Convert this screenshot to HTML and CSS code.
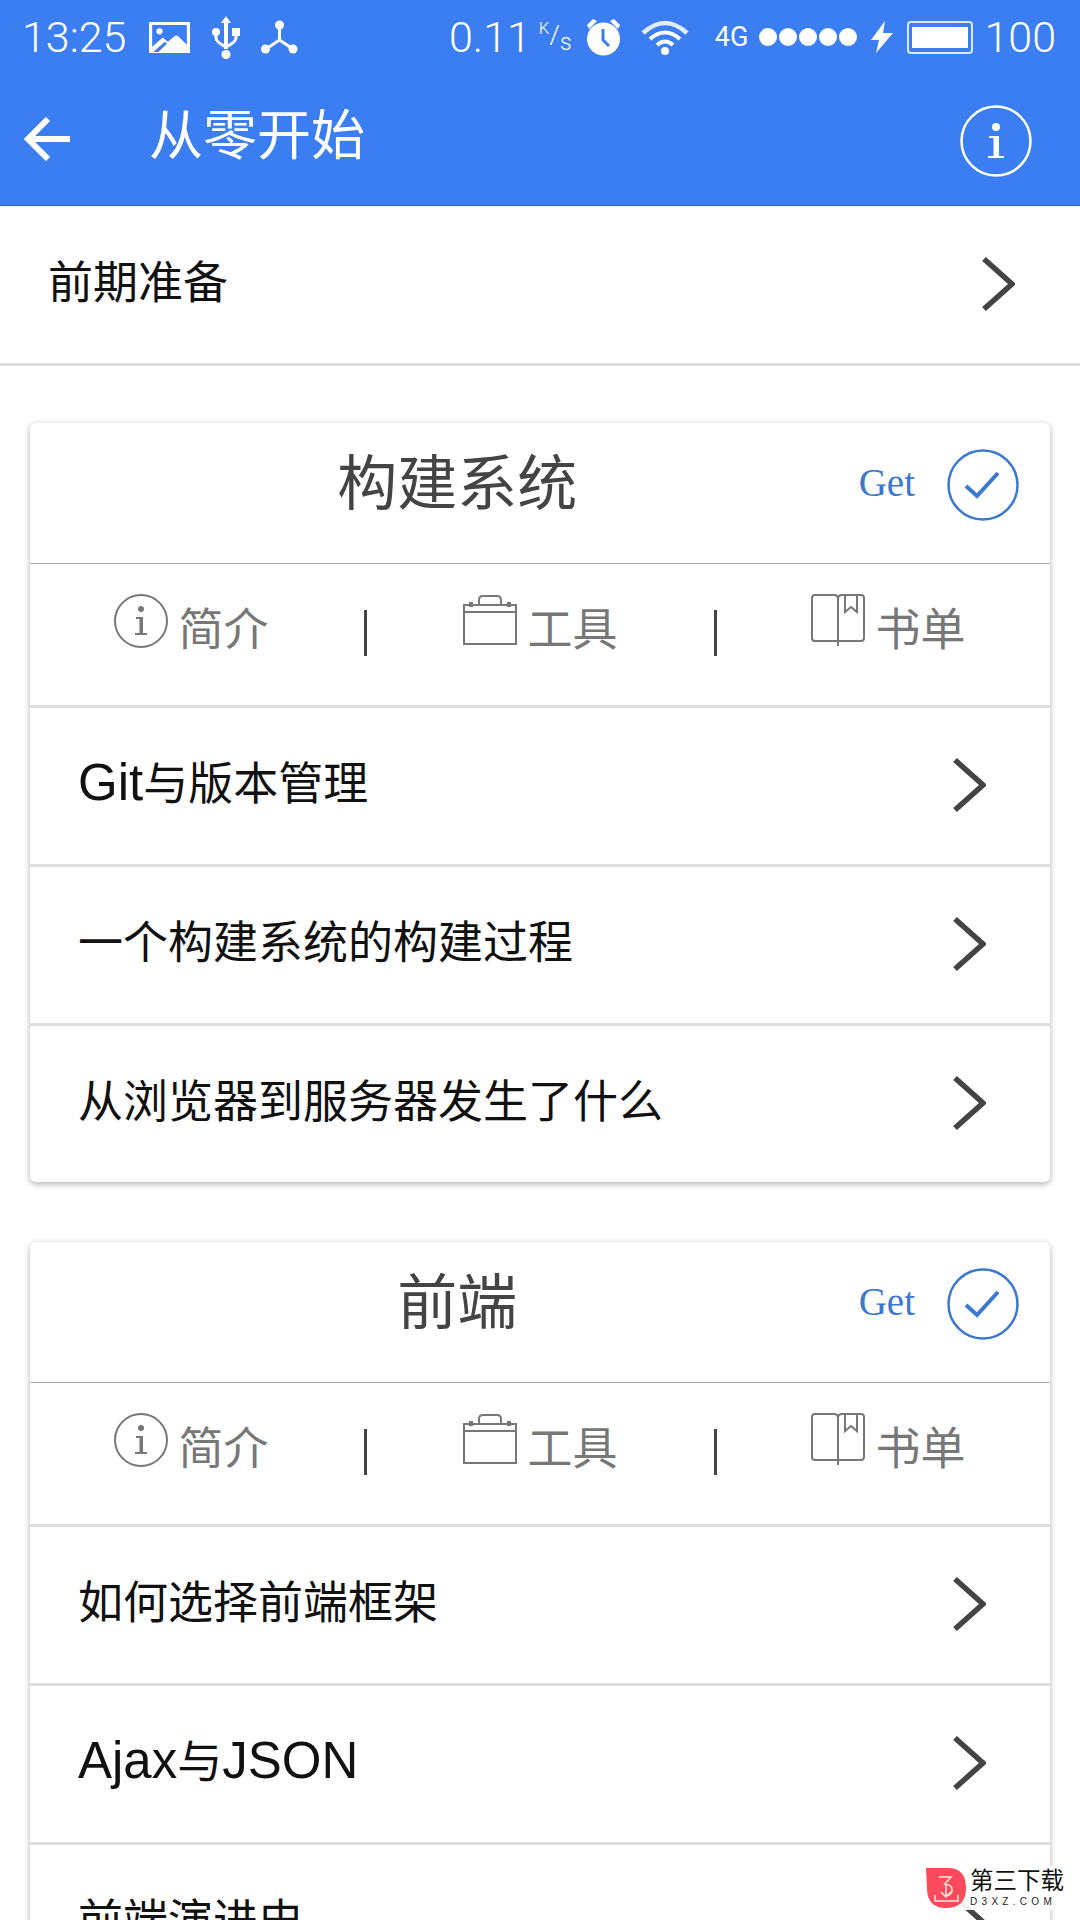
FILE: index.html
```html
<!DOCTYPE html>
<html lang="zh-CN">
<head>
    <meta charset="UTF-8">
    <meta name="viewport" content="width=device-width, initial-scale=1.0">
    <title>从零开始</title>
    <link rel="stylesheet" href="styles.css">
</head>
<body>
    <svg class="defs" width="0" height="0">
        <symbol id="chevron" viewBox="0 0 34 54">
            <path d="M3 2 L31 27 L3 52" fill="none" stroke="#444" stroke-width="5.500"/>
        </symbol>
        <symbol id="info" viewBox="0 0 54 54">
            <circle cx="27" cy="27" r="26" fill="none" stroke="#777" stroke-width="2"/>
            <circle cx="27" cy="15" r="3" fill="#777"/>
            <path d="M22 23 H29 V39 H33 V41 H21 V39 H25.500 V25 H22 Z" fill="#777"/>
        </symbol>
        <symbol id="case" viewBox="0 0 54 54">
            <path d="M1 11 H53 V50 H1 Z M1 18 H53 M16 11 V6 Q16 2 20 2 H34 Q38 2 38 6 V11" fill="none" stroke="#777" stroke-width="2"/>
            <path d="M6 8 H10 V13 H6 Z M44 8 H48 V13 H44 Z" fill="#777"/>
        </symbol>
        <symbol id="book" viewBox="0 0 54 54">
            <path d="M27 47 H4 Q1 47 1 44 V4 Q1 1 4 1 H23 Q27 1 27 5 V52 M27 47 H50 Q53 47 53 44 V4 Q53 1 50 1 H31 Q27 1 27 5" fill="none" stroke="#777" stroke-width="2"/>
            <path d="M34 1 V18 L40 13 L46 18 V1" fill="none" stroke="#777" stroke-width="2"/>
        </symbol>
        <symbol id="check" viewBox="0 0 72 72">
            <circle cx="36" cy="36" r="34.500" fill="none" stroke="#3b78d0" stroke-width="2.500"/>
            <path d="M19 37 L30 47 L51 24" fill="none" stroke="#3b78d0" stroke-width="4"/>
        </symbol>
    </svg>

    <header class="app-header">
        <div class="status-bar">
            <div class="status-left">
                <span class="status-time">13:25</span>
                <svg class="icon-image" width="41" height="31" viewBox="0 0 39 30" preserveAspectRatio="none">
                    <path d="M0 0 H39 V30 H0 Z" fill="#fff"/>
                    <path d="M3 3 H36 V22 L28 14 Q26 12 24 14 L18 19 L13 15 L3 24 Z" fill="#3b7ef2"/>
                    <circle cx="10" cy="9" r="3" fill="#fff"/>
                    <path d="M4 29 L15 19 L17 21 L9 29 Z" fill="#3b7ef2"/>
                </svg>
                <svg class="icon-usb" width="28" height="43" viewBox="0 0 28 43">
                    <path d="M14 0 L19 7 H16 V33 H12 V7 H9 Z" fill="#fff"/>
                    <circle cx="14" cy="38.500" r="4.500" fill="#fff"/>
                    <circle cx="4" cy="16" r="4" fill="#fff"/>
                    <path d="M20 12 H28 V20 H20 Z" fill="#fff"/>
                    <path d="M4 18 V22 Q4 26 14 31 Q24 26 24 22 V18" fill="none" stroke="#fff" stroke-width="3"/>
                </svg>
                <svg class="icon-nodes" width="37" height="34" viewBox="0 0 37 34">
                    <circle cx="18.500" cy="5" r="4.500" fill="#fff"/>
                    <circle cx="4.500" cy="29" r="4.500" fill="#fff"/>
                    <circle cx="32" cy="29" r="4.500" fill="#fff"/>
                    <path d="M18.500 7 V20 L5 29 M18.500 20 L32 29" fill="none" stroke="#fff" stroke-width="3"/>
                </svg>
            </div>
            <div class="status-right">
                <span class="status-speed">0.11</span>
                <span class="status-unit"><sup>K</sup>/<sub>s</sub></span>
                <svg class="icon-alarm" width="35" height="38" viewBox="0 0 35 38">
                    <circle cx="17.500" cy="21" r="16.500" fill="#fff"/>
                    <path d="M1 7 L7 1 L11 3 L3 11 Z M34 7 L28 1 L24 3 L32 11 Z" fill="#fff"/>
                    <path d="M17 11 V22 L23 28" fill="none" stroke="#3b7ef2" stroke-width="3"/>
                </svg>
                <svg class="icon-wifi" width="48" height="35" viewBox="0 0 48 35">
                    <path d="M2 13 Q24 -7 46 13" fill="none" stroke="#fff" stroke-width="4.500" opacity=".85"/>
                    <path d="M9 19 Q24 6 39 19" fill="none" stroke="#fff" stroke-width="4"/>
                    <path d="M16 25 Q24 18 32 25" fill="none" stroke="#fff" stroke-width="4"/>
                    <circle cx="24" cy="31" r="4" fill="#fff"/>
                </svg>
                <span class="status-net">4G</span>
                <span class="signal">
                    <i></i><i></i><i></i><i></i><i></i>
                </span>
                <svg class="icon-bolt" width="22" height="32" viewBox="0 0 22 32">
                    <path d="M14 0 L0 19 H8 L5 32 L22 12 H12 Z" fill="#fff"/>
                </svg>
                <span class="battery"><span class="battery-fill"></span></span>
                <span class="status-level">100</span>
            </div>
        </div>
        <div class="title-bar">
            <svg class="back-icon" width="46" height="44" viewBox="0 0 46 44">
                <path d="M24 2 L4 22 L24 42 M4 22 H46" fill="none" stroke="#fff" stroke-width="6"/>
            </svg>
            <h1 class="page-title">从零开始</h1>
            <svg class="about-icon" width="72" height="72" viewBox="0 0 72 72">
                <circle cx="36" cy="36" r="34.500" fill="none" stroke="#fff" stroke-width="2.500"/>
                <circle cx="36" cy="22" r="4" fill="#fff"/>
                <path d="M29 31 H39 V51 H44 V53 H28 V51 H33.500 V33 H29 Z" fill="#fff"/>
            </svg>
        </div>
    </header>

    <a class="top-row">
        <span>前期准备</span>
        <svg class="chevron" width="34" height="54"><use href="#chevron"/></svg>
    </a>

    <section class="card">
        <div class="card-head">
            <h2 class="card-title">构建系统</h2>
            <span class="get-label">Get</span>
            <svg class="check-icon" width="72" height="72"><use href="#check"/></svg>
        </div>
        <div class="tabs">
            <div class="tab"><svg width="54" height="54"><use href="#info"/></svg><span>简介</span></div>
            <i class="tab-sep"></i>
            <div class="tab"><svg width="54" height="54"><use href="#case"/></svg><span>工具</span></div>
            <i class="tab-sep"></i>
            <div class="tab"><svg width="54" height="54"><use href="#book"/></svg><span>书单</span></div>
        </div>
        <a class="row"><span><b class="latin">Git</b>与版本管理</span><svg class="chevron" width="34" height="54"><use href="#chevron"/></svg></a>
        <a class="row"><span>一个构建系统的构建过程</span><svg class="chevron" width="34" height="54"><use href="#chevron"/></svg></a>
        <a class="row"><span>从浏览器到服务器发生了什么</span><svg class="chevron" width="34" height="54"><use href="#chevron"/></svg></a>
    </section>

    <section class="card">
        <div class="card-head">
            <h2 class="card-title">前端</h2>
            <span class="get-label">Get</span>
            <svg class="check-icon" width="72" height="72"><use href="#check"/></svg>
        </div>
        <div class="tabs">
            <div class="tab"><svg width="54" height="54"><use href="#info"/></svg><span>简介</span></div>
            <i class="tab-sep"></i>
            <div class="tab"><svg width="54" height="54"><use href="#case"/></svg><span>工具</span></div>
            <i class="tab-sep"></i>
            <div class="tab"><svg width="54" height="54"><use href="#book"/></svg><span>书单</span></div>
        </div>
        <a class="row"><span>如何选择前端框架</span><svg class="chevron" width="34" height="54"><use href="#chevron"/></svg></a>
        <a class="row"><span><b class="latin">Ajax</b>与<b class="latin">JSON</b></span><svg class="chevron" width="34" height="54"><use href="#chevron"/></svg></a>
        <a class="row"><span>前端演进史</span><svg class="chevron" width="34" height="54"><use href="#chevron"/></svg></a>
    </section>

    <!-- watermark sits over the page corner -->
    <div class="watermark">
        <svg width="40" height="40" viewBox="0 0 40 40">
            <path d="M0 0 H22 Q40 0 40 20 Q40 40 20 40 Q1 40 1 20 Z" fill="#fb4a5c"/>
            <path d="M13 9 H25 L19 16 Q27 17 26 23 Q25 28 19 27 M20 16 V29 M15 24 L20 29 L25 24 M9 27 V33 H32 V27" fill="none" stroke="#ffe9e0" stroke-width="1.500"/>
        </svg>
        <div class="watermark-text">
            <strong>第三下载</strong>
            <small>D3XZ.COM</small>
        </div>
    </div>
</body>
</html>
```

FILE: styles.css
```css
* {
    margin: 0;
    padding: 0;
    box-sizing: border-box;
}

html, body {
    height: 1920px;
    overflow: hidden;
}

body {
    position: relative;
    font-family: "Liberation Sans", "Noto Sans CJK SC", sans-serif;
    background-color: white;
    color: #111;
}

.defs {
    position: absolute;
}

/* header */
.app-header {
    height: 206px;
    background-color: #3b7ef2;
    border-bottom: 1px solid #2d68b8;
    color: white;
}

.status-bar {
    display: flex;
    justify-content: space-between;
    height: 72px;
    padding: 15px 24px 0 22px;
}

.status-left, .status-right {
    display: flex;
    align-items: center;
    height: 44px;
    font-family: Roboto, sans-serif;
    font-weight: 300;
}

.status-time {
    font-size: 43px;
}

.icon-image {
    margin-left: 23px;
}

.icon-usb {
    margin-left: 22px;
}

.icon-nodes {
    margin-left: 21px;
}

.status-speed, .status-level {
    font-size: 43px;
}

.status-unit {
    width: 29px;
    margin-left: 8px;
    font-size: 26px;
    line-height: 1;
    white-space: nowrap;
}

.status-unit sup {
    font-size: 17px;
    vertical-align: 10px;
}

.status-unit sub {
    font-size: 23px;
    vertical-align: -6px;
}

.icon-alarm {
    margin-left: 18px;
}

.icon-wifi {
    margin-left: 20px;
}

.status-net {
    margin-left: 26px;
    font-size: 27px;
    font-weight: 400;
}

.signal {
    display: flex;
    gap: 2px;
    margin-left: 11px;
}

.signal i {
    width: 18px;
    height: 18px;
    border-radius: 50%;
    background-color: white;
}

.icon-bolt {
    margin-left: 14px;
}

.battery {
    width: 66px;
    height: 33px;
    margin-left: 14px;
    padding: 4px 3px;
    border: 2px solid #dbe8fd;
    border-radius: 4px;
}

.battery-fill {
    display: block;
    height: 100%;
    background-color: white;
}

.status-level {
    margin-left: 11px;
}

.title-bar {
    display: flex;
    align-items: center;
    height: 133px;
    padding: 0 48px 0 24px;
}

.page-title {
    flex: 1;
    margin-left: 79px;
    margin-top: -14px;
    font-size: 54px;
    font-weight: 400;
}

.back-icon {
    margin-top: 0;
}

.about-icon {
    margin-top: 4px;
}

/* rows */
.top-row, .row {
    display: flex;
    align-items: center;
    justify-content: space-between;
    font-size: 45px;
}

.top-row {
    height: 160px;
    padding: 0 65px 0 48px;
    border-bottom: 3px solid #ddd;
}

.top-row span {
    margin-top: -10px;
}

.row span {
    margin-top: -12px;
}

.latin {
    font-size: 51px;
    font-weight: 400;
}

.card {
    margin: 57px 30px 60px;
    background-color: white;
    border-radius: 6px;
    box-shadow: 0 2px 6px rgba(0,0,0,0.3);
}

.card-head {
    display: flex;
    align-items: center;
    height: 141px;
    padding: 0 31px 16px 0;
    border-bottom: 1px solid #aaa;
}

.card-title {
    flex: 1;
    margin-top: -14px;
    padding-left: 26px;
    font-size: 60px;
    font-weight: 400;
    text-align: center;
    color: #444;
}

.get-label {
    margin-top: -6px;
    margin-right: 32px;
    font-family: "Liberation Serif", serif;
    font-size: 39px;
    color: #3b78d0;
}

.check-icon {
    display: block;
}

.tabs {
    display: grid;
    grid-template-columns: 334px 3px 347px 3px 1fr;
    align-items: start;
    height: 144px;
    border-bottom: 3px solid #ddd;
}

.tab {
    display: flex;
    justify-content: center;
    gap: 10px;
    padding-top: 30px;
    font-size: 45px;
    color: #777;
}

.tab:first-child {
    padding-right: 11px;
}

.tab:last-child {
    padding-left: 10px;
}

.tab span {
    margin-top: 7px;
    line-height: 60px;
}

.tab-sep {
    height: 46px;
    margin-top: 46px;
    background-color: #444;
}

.row {
    height: 159px;
    padding: 0 64px 0 48px;
    border-bottom: 3px solid #ddd;
}

.row:last-child {
    height: 156px;
    border-bottom: none;
}

.chevron {
    display: block;
    margin-top: -2px;
}

/* watermark */
.watermark {
    position: absolute;
    right: 10px;
    bottom: 10px;
    display: flex;
    align-items: center;
    gap: 4px;
    padding: 2px 4px 2px 0;
    background-color: rgba(255,255,255,0.92);
}

.watermark-text {
    display: flex;
    flex-direction: column;
    width: 96px;
}

.watermark-text strong {
    font-size: 23.500px;
    line-height: 27px;
    font-weight: 400;
    color: #111;
}

.watermark-text small {
    font-size: 10px;
    line-height: 13px;
    letter-spacing: 4.300px;
    color: #222;
    white-space: nowrap;
}
```
